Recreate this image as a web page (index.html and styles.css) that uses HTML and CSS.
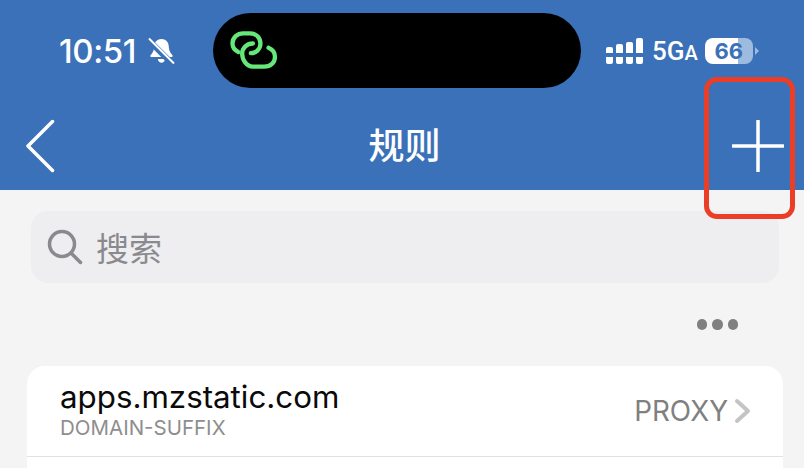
FILE: index.html
```html
<!DOCTYPE html>
<html>
<head>
    <title>规则</title>
    <meta charset="UTF-8">
    <meta name="viewport" content="width=device-width, initial-scale=1">
    <link rel="stylesheet" href="styles.css">
</head>
<body>
    <div class="page">
        <header class="header">
            <div class="status-bar">
                <div class="status-left">
                    <span class="time">10:51</span>
                    <svg class="bell" width="27" height="28" viewBox="0 0 27 28">
                        <path d="M13.500 2c-4.300 0-7 3.200-7.200 7-.2 3.800-1 6.200-3.600 8.900-.8.900-.2 2.100 1 2.100h19.600c1.200 0 1.800-1.200 1-2.100-2.600-2.700-3.400-5.100-3.600-8.900-.2-3.800-2.900-7-7.200-7z" fill="#fff"/>
                        <path d="M9.800 22h7.400c-.3 2.300-1.800 3.800-3.700 3.800S10.100 24.300 9.800 22z" fill="#fff"/>
                        <path d="M0 2.500l25 25" stroke="#3b71b8" stroke-width="6"/>
                        <path d="M1 1.500l25 25" stroke="#fff" stroke-width="2"/>
                    </svg>
                </div>
                <div class="island">
                    <svg width="52" height="43" viewBox="0 0 48 40" fill="none" stroke="#66e878" stroke-width="4" stroke-linecap="round" stroke-linejoin="round">
                        <path d="M9.500 21.500c-3.500-1.800-5.500-4.700-5.500-8C4 8 8.500 4 14 4h6c6 0 10 4 10 9.500 0 5.500-4.500 9-9 9"/>
                        <path d="M23 13.500c-5.500 0-10 4-10 9.500S17 35 23 35h10.500c6 0 10-3.800 10-9 0-4-2.300-7-6-8.500"/>
                    </svg>
                </div>
                <div class="status-right">
                    <div class="signal">
                        <span class="bar bar-1"></span>
                        <span class="bar bar-2"></span>
                        <span class="bar bar-3"></span>
                        <span class="bar bar-4"></span>
                    </div>
                    <span class="network">5G<small>A</small></span>
                    <div class="battery"><span class="battery-level">66</span></div>
                    <span class="battery-cap"></span>
                </div>
            </div>
            <nav class="nav">
                <svg class="nav-icon" width="30" height="54" viewBox="0 0 30 54" fill="none" stroke="#fff" stroke-width="3.500" stroke-linecap="round" stroke-linejoin="round">
                    <path d="M26.500 2.500L2 27l24.500 24.500"/>
                </svg>
                <h1 class="title">规则</h1>
                <svg class="nav-icon" width="52" height="52" viewBox="0 0 52 52" fill="none" stroke="#fff" stroke-width="3.500" stroke-linecap="round">
                    <path d="M26 1v50M1 26h50"/>
                </svg>
            </nav>
        </header>

        <main class="content">
            <div class="search">
                <svg width="36" height="36" viewBox="0 0 36 36" fill="none" stroke="#8a8a8e" stroke-width="3.500" stroke-linecap="round">
                    <circle cx="15" cy="15" r="12.500"/>
                    <path d="M24.500 24.500L33.500 33.500"/>
                </svg>
                <span class="search-text">搜索</span>
            </div>
            <div class="more">
                <span class="dot"></span>
                <span class="dot"></span>
                <span class="dot"></span>
            </div>
            <ul class="rules">
                <li class="rule">
                    <div class="rule-info">
                        <div class="rule-host">apps.mzstatic.com</div>
                        <div class="rule-type">DOMAIN-SUFFIX</div>
                    </div>
                    <span class="rule-policy">PROXY</span>
                    <svg width="17" height="26" viewBox="0 0 17 26" fill="none" stroke="#c4c4c6" stroke-width="4" stroke-linecap="round" stroke-linejoin="round">
                        <path d="M3 3l11 10L3 23"/>
                    </svg>
                </li>
            </ul>
        </main>

        <div class="highlight"></div>
    </div>
</body>
</html>
```

FILE: styles.css
```css
body {
    margin: 0;
    background: #f4f4f4;
    font-family: Inter, "Noto Sans CJK SC", sans-serif;
}
.page {
    position: relative;
    width: 804px;
    height: 468px;
    overflow: hidden;
}

/* шапка */
.header {
    height: 190px;
    background: #3b71b8;
    color: #fff;
}
.status-bar {
    display: flex;
    align-items: center;
    height: 75px;
    padding: 13px 0 0 59px;
}
.status-left {
    display: flex;
    align-items: center;
    gap: 12px;
    width: 154px;
}
.time {
    font-size: 33px;
    font-weight: 500;
    letter-spacing: -.4px;
}
.island {
    display: flex;
    align-items: center;
    box-sizing: border-box;
    width: 368px;
    height: 75px;
    padding-left: 15px;
    background: #000;
    border-radius: 38px;
}
.status-right {
    display: flex;
    align-items: center;
    margin-left: 25px;
}
.signal {
    display: flex;
    align-items: flex-end;
    gap: 3px;
    height: 26px;
}
.bar {
    display: block;
    width: 7px;
    border-radius: 2px;
}
.bar-1 { height: 17px; background: linear-gradient(#fff 0 6px, transparent 6px 10px, #fff 10px); }
.bar-2 { height: 20px; background: linear-gradient(#fff 0 9px, transparent 9px 13px, #fff 13px); }
.bar-3 { height: 22px; background: linear-gradient(#fff 0 11px, transparent 11px 15px, #fff 15px); }
.bar-4 { height: 26px; background: linear-gradient(#fff 0 15px, transparent 15px 19px, #fff 19px); }
.network {
    margin-left: 9px;
    font-family: Roboto, sans-serif;
    font-size: 26px;
    font-weight: 500;
}
.network small {
    font-size: 20px;
}
.battery {
    display: flex;
    align-items: center;
    justify-content: center;
    width: 48px;
    height: 26px;
    margin-left: 7px;
    border-radius: 8px;
    background: linear-gradient(90deg, #fff 0 69%, #9dbadf 69%);
}
.battery-level {
    color: #3b71b8;
    font-size: 22px;
    font-weight: 700;
}
.battery-cap {
    width: 0;
    height: 0;
    margin-left: 2px;
    border-left: 4px solid #9dbadf;
    border-top: 4px solid transparent;
    border-bottom: 4px solid transparent;
}
.nav {
    display: flex;
    align-items: center;
    justify-content: space-between;
    box-sizing: border-box;
    height: 102px;
    padding: 14px 20px 0 26px;
}
.title {
    margin: 0 0 6px 21px;
    font-family: "Noto Sans CJK SC", sans-serif;
    font-size: 36px;
    font-weight: 500;
    line-height: 1;
}

/* контент */
.content {
    padding: 21px 21px 0 27px;
}
.search {
    display: flex;
    align-items: center;
    gap: 13px;
    height: 72px;
    margin: 0 4px;
    padding-left: 16px;
    border-radius: 17px;
    background: #eeeef0;
}
.search-text {
    color: #8a8a8e;
    font-family: "Noto Sans CJK SC", sans-serif;
    font-size: 33px;
}
.more {
    display: flex;
    justify-content: flex-end;
    align-items: center;
    gap: 5px;
    height: 83px;
    padding-right: 45px;
}
.dot {
    width: 10.500px;
    height: 10.500px;
    border-radius: 50%;
    background: #808080;
}
.rules {
    margin: 0;
    padding: 0;
    list-style: none;
    height: 110px;
    border-radius: 18px 18px 0 0;
    background: #fff;
}
.rule {
    display: flex;
    align-items: center;
    box-sizing: border-box;
    height: 91px;
    padding: 0 32px 0 33px;
    border-bottom: 1px solid #e2e2e2;
}
.rule-info {
    flex: 1;
}
.rule-host {
    color: #0a0a0a;
    font-size: 31.300px;
    line-height: 36px;
    margin-top: -3px;
}
.rule-type {
    color: #8e8e8e;
    font-size: 20.500px;
    line-height: 26px;
}
.rule-policy {
    margin-right: 6px;
    color: #808080;
    font-size: 27.800px;
}

/* красная рамка поверх экрана */
.highlight {
    position: absolute;
    left: 704px;
    top: 77px;
    box-sizing: border-box;
    width: 91px;
    height: 142px;
    border: 5px solid #ea3f26;
    border-radius: 13px;
}
```
